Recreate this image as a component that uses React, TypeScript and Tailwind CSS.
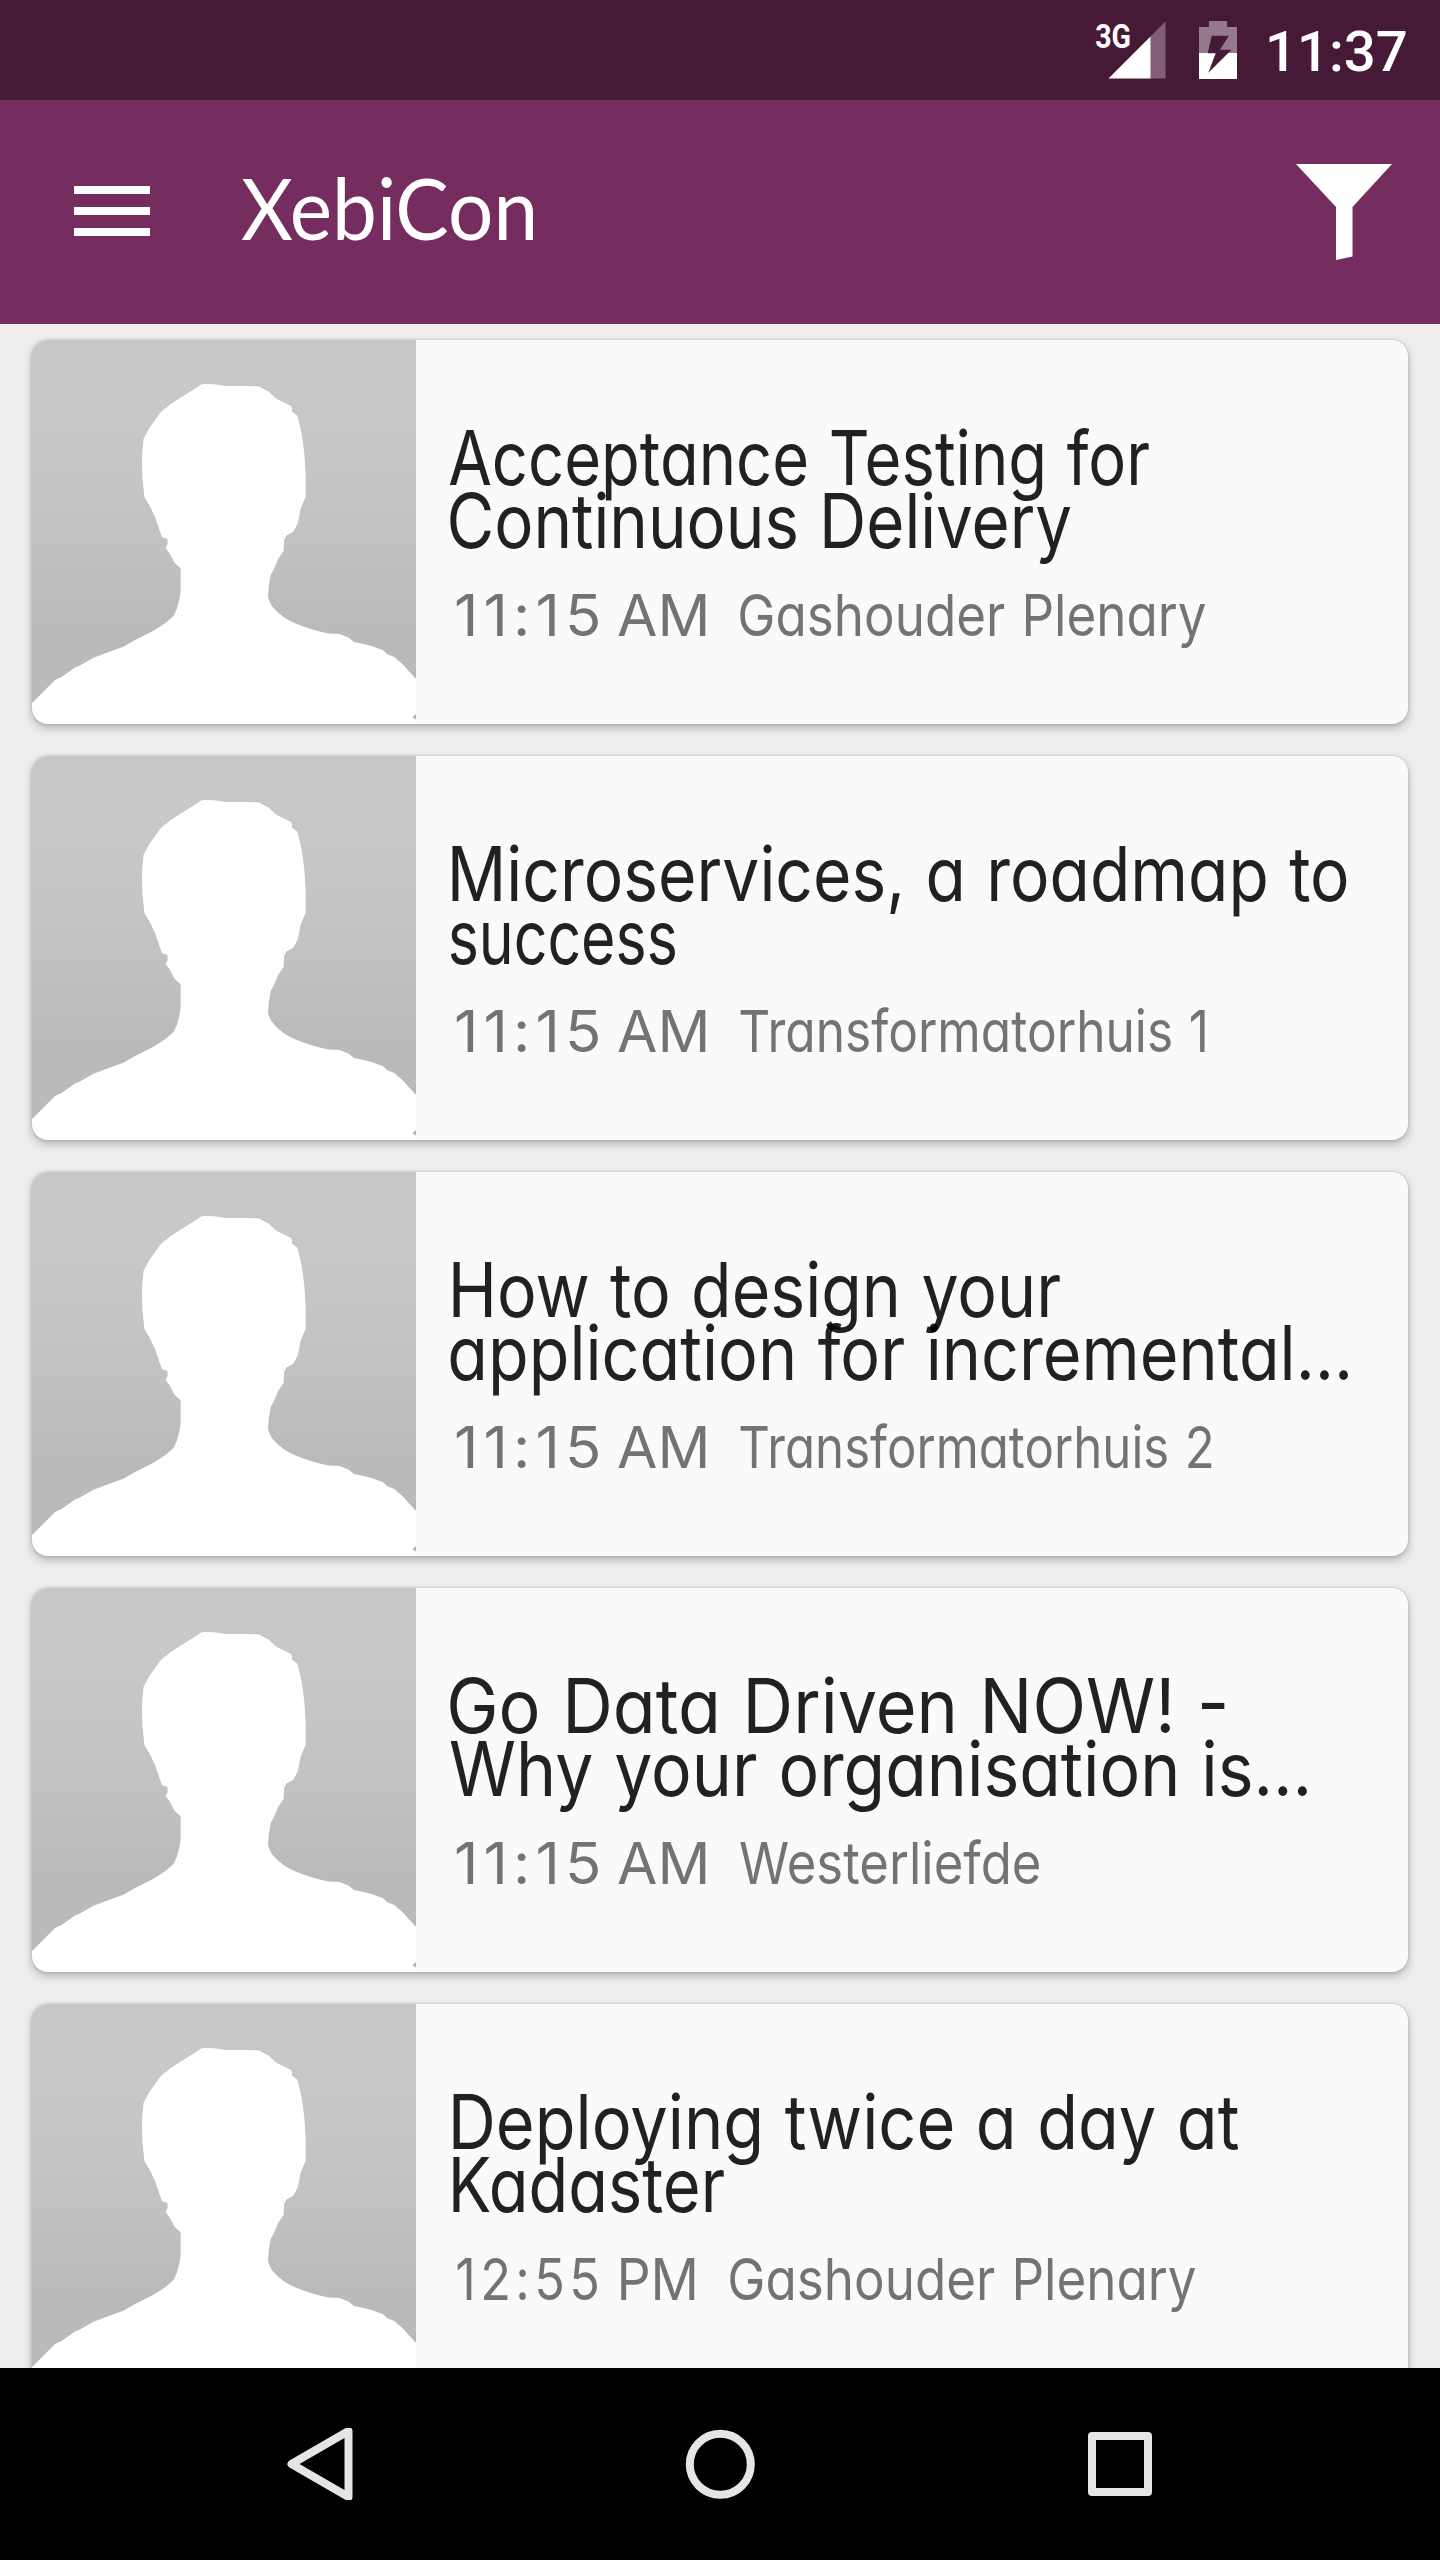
import React, { useLayoutEffect, useRef } from "react";

type FitProps = {
  text: string;
  start: number;
  width: number;
  className: string;
};

// One line of text whose ink starts at `start` and is `width` pixels wide.
function FitText({ text, start, width, className }: FitProps) {
  const ref = useRef<HTMLSpanElement>(null);
  useLayoutEffect(() => {
    const el = ref.current!;
    el.style.transform = "none";
    const advance = el.getBoundingClientRect().width;
    const css = getComputedStyle(el);
    const c = document.createElement("canvas").getContext("2d") as any;
    c.font = `${css.fontWeight} ${css.fontSize} ${css.fontFamily}`;
    c.letterSpacing = css.letterSpacing;
    c.wordSpacing = css.wordSpacing;
    const m = c.measureText(text);
    const bearings = m.width - (m.actualBoundingBoxLeft + m.actualBoundingBoxRight);
    const scale = width / (advance - bearings);
    const shift = start + m.actualBoundingBoxLeft * scale;
    el.style.transform = `translateX(${shift}px) scaleX(${scale})`;
  }, [text, start, width]);
  return (
    <span ref={ref} className={`inline-block origin-left whitespace-nowrap ${className}`}>
      {text}
    </span>
  );
}

type Line = [text: string, start: number, width: number];
type Session = { title: [Line, Line]; time: [Line, Line]; room: Line };

const at1115: [Line, Line] = [["11:15", 8, 142], ["AM", 170, 88]];
const at1255: [Line, Line] = [["12:55", 9, 140], ["PM", 173, 74]];

const sessions: Session[] = [
  {
    title: [["Acceptance Testing for", 1, 700], ["Continuous Delivery", 2, 621]],
    time: at1115,
    room: ["Gashouder Plenary", 292, 466],
  },
  {
    title: [["Microservices, a roadmap to", 4, 895], ["success", 2, 225]],
    time: at1115,
    room: ["Transformatorhuis 1", 292, 465],
  },
  {
    title: [["How to design your", 5, 607], ["application for incremental…", 2, 898]],
    time: at1115,
    room: ["Transformatorhuis 2", 292, 472],
  },
  {
    title: [["Go Data Driven NOW! -", 2, 775], ["Why your organisation is…", 2, 857]],
    time: at1115,
    room: ["Westerliefde", 292, 299],
  },
  {
    title: [["Deploying twice a day at", 5, 786], ["Kadaster", 5, 271]],
    time: at1255,
    room: ["Gashouder Plenary", 282, 466],
  },
];

function Avatar() {
  return (
    <svg className="size-96 shrink-0" viewBox="36 29 1152 1153" preserveAspectRatio="none">
      <defs>
        <linearGradient id="backdrop" x1="0" y1="0" x2="0" y2="1">
          <stop offset="0.2" stopColor="#c7c8ca" />
          <stop offset="0.5" stopColor="#c1c2c3" />
          <stop offset="0.75" stopColor="#bababa" />
        </linearGradient>
      </defs>
      <rect x="36" y="29" width="1152" height="1153" fill="url(#backdrop)" />
      <path
        fill="#fff"
        d="M36 1120L105 1050L125 1041L165 1012L180 1006L220 983L310 950L340 933L400 902C430 885 445 873 460 858C475 835 480 800 482 780L482 715L463 697L448 668L437 654L443 640L442 626L426 621L405 560L388 525L373 500L367 440L366 375L371 325L390 290L425 243L455 220L545 162Q570 158 620 167L715 168L745 183L768 205L814 228L817 246L832 256L845 310L853 370L857 430L857 500L842 535L833 580L820 605L800 615L792 630L791 662L775 685L765 710L752 735Q744 770 744 800Q748 822 765 838Q785 862 830 882Q880 902 925 910L958 912L985 922L1002 936L1050 946L1088 960L1103 973L1122 980L1150 1005L1188 1047V1182H36Z"
      />
      <path fill="#b4b4b4" d="M1188 1152L1177 1161L1188 1169Z" />
    </svg>
  );
}

function SessionCard({ session }: { session: Session }) {
  return (
    <article className="flex h-96 shrink-0 overflow-hidden rounded-[16px] bg-[#fafafa] shadow-[0_4px_8px_rgba(0,0,0,0.26),0_0_3px_rgba(0,0,0,0.2)]">
      <Avatar />
      <div className="grow pt-[86px] pl-8 font-['Inter']">
        <h2 className="text-[75px] text-black/87">
          {session.title.map(([text, start, width]) => (
            <div key={text} className="h-[63px] leading-[63px]">
              <FitText
                text={text}
                start={start}
                width={width}
                className="[font-feature-settings:'cv11'] [word-spacing:2px]"
              />
            </div>
          ))}
        </h2>
        <div className="mt-[27px] grid h-[72px] text-[58px] leading-[72px] text-black/54">
          {session.time.map(([text, start, width]) => (
            <p key={text} className="col-start-1 row-start-1">
              <FitText text={text} start={start} width={width} className={text.includes(":") ? "tracking-[5px]" : ""} />
            </p>
          ))}
          <p className="col-start-1 row-start-1">
            <FitText
              text={session.room[0]}
              start={session.room[1]}
              width={session.room[2]}
              className="[font-feature-settings:'cv11'] [word-spacing:2px]"
            />
          </p>
        </div>
      </div>
    </article>
  );
}

function StatusBar() {
  return (
    <div className="flex h-[100px] shrink-0 items-start bg-[#461a37] pl-[1096px] font-['Roboto'] text-white">
      <div className="relative mt-[20px] h-[60px] w-[70px] shrink-0">
        <svg className="absolute inset-0" width="70" height="60" viewBox="1096 20 70 60">
          <path fill="#825f76" d="M1150 37L1165.500 21.500V78.500H1150Z" />
          <path fill="#fff" d="M1108.500 78.500L1150.500 36.500V78.500Z" />
        </svg>
        <div className="absolute top-0 left-0 h-[32px] leading-[32px]">
          <FitText text="3G" start={0} width={34} className="text-[34px] font-bold" />
        </div>
      </div>
      <svg className="mt-[20px] ml-[32px] shrink-0" width="40" height="60" viewBox="1198 20 40 60">
        <path fill="#957a8e" d="M1199 53V27H1209V21H1227V27H1237V53Z" />
        <path fill="#fff" d="M1199 53H1237V79H1199Z" />
        <path fill="#461a37" d="M1211.700 35.700H1229L1220 49.700H1231.500L1208.300 72.700L1215.700 53.300H1207.700Z" />
      </svg>
      <div className="ml-[30px] h-[105px] leading-[105px]">
        <FitText text="11:37" start={1} width={137} className="text-[56px] font-medium" />
      </div>
    </div>
  );
}

function Toolbar() {
  return (
    <header className="flex h-56 shrink-0 items-start bg-[#752d60] text-white">
      <div className="mt-[86px] ml-[74px] flex w-[76px] shrink-0 flex-col gap-[13px]">
        <span className="h-2 bg-white" />
        <span className="h-2 bg-white" />
        <span className="h-2 bg-white" />
      </div>
      <h1 className="ml-[90px] h-[214px] grow leading-[214px]">
        <FitText text="XebiCon" start={1} width={292} className="font-['Lato'] text-[85px]" />
      </h1>
      <svg className="mt-16 mr-12 shrink-0" width="96" height="96" viewBox="0 0 96 96">
        <path fill="#fff" d="M0 0H96L56.500 43V92.500L40 96V43Z" />
      </svg>
    </header>
  );
}

function NavigationBar() {
  return (
    <nav className="flex h-48 shrink-0 items-center gap-[328px] bg-black pl-[284px]">
      <svg width="72" height="72" fill="none" stroke="#e5e5e5" strokeWidth="8" strokeLinejoin="round">
        <path d="M64.500 3V69L7.500 36Z" />
      </svg>
      <svg width="72" height="72" fill="none" stroke="#e5e5e5" strokeWidth="8">
        <circle cx="36.300" cy="36.300" r="30.500" />
      </svg>
      <svg width="72" height="72" fill="none" stroke="#e5e5e5" strokeWidth="8" strokeLinejoin="round">
        <rect x="8" y="8" width="56" height="56" />
      </svg>
    </nav>
  );
}

export default function App() {
  return (
    <div className="flex h-[2560px] w-[1440px] flex-col overflow-hidden bg-[#eeeeee]">
      <StatusBar />
      <Toolbar />
      <main className="flex min-h-0 grow flex-col gap-8 overflow-hidden px-8 pt-4">
        {sessions.map((session, i) => (
          <SessionCard key={i} session={session} />
        ))}
      </main>
      <NavigationBar />
    </div>
  );
}
